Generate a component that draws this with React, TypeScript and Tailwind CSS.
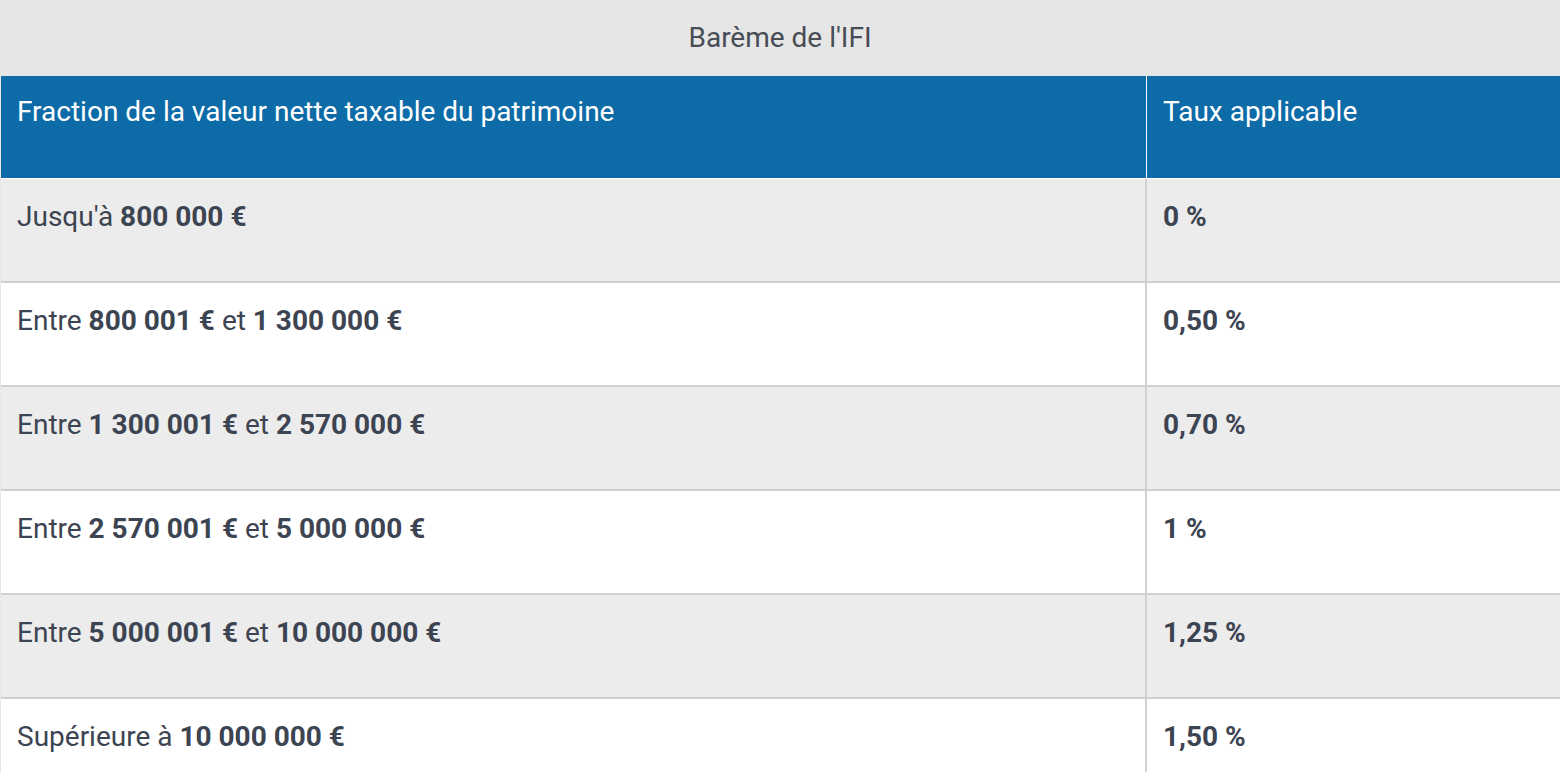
import React from "react";

const rows: { label: React.ReactNode; rate: string }[] = [
  { label: <>Jusqu'à <b className="font-bold">800 000 €</b></>, rate: "0 %" },
  { label: <>Entre <b className="font-bold">800 001 €</b> et <b className="font-bold">1 300 000 €</b></>, rate: "0,50 %" },
  { label: <>Entre <b className="font-bold">1 300 001 €</b> et <b className="font-bold">2 570 000 €</b></>, rate: "0,70 %" },
  { label: <>Entre <b className="font-bold">2 570 001 €</b> et <b className="font-bold">5 000 000 €</b></>, rate: "1 %" },
  { label: <>Entre <b className="font-bold">5 000 001 €</b> et <b className="font-bold">10 000 000 €</b></>, rate: "1,25 %" },
  { label: <>Supérieure à <b className="font-bold">10 000 000 €</b></>, rate: "1,50 %" },
];

export default function App() {
  return (
    <div className="w-[1560px] h-[772px] overflow-hidden bg-white font-['Roboto',sans-serif] text-[28px] leading-[42px]">
      <div className="h-[76px] bg-[#e6e6e6] flex items-center justify-center text-[#474c55]">
        Barème de l'IFI
      </div>
      <div className="border-l border-[#e6e6e6]">
        <div className="grid grid-cols-[1146px_1fr] bg-[#0d6ba8] text-white h-[103px] border-b border-white">
          <div className="px-[16px] pt-[15px] border-r border-white">Fraction de la valeur nette taxable du patrimoine</div>
          <div className="px-[16px] pt-[15px]">Taux applicable</div>
        </div>
        {rows.map((r, i) => (
          <div
            key={i}
            className={`grid grid-cols-[1146px_1fr] h-[104px] border-b-2 border-[#d0d0d0] text-[#3d4451] ${i % 2 === 0 ? "bg-[#ececec]" : "bg-white"}`}
          >
            <div className="px-[16px] pt-[17px] border-r-2 border-[#d0d0d0]">{r.label}</div>
            <div className="px-[16px] pt-[17px] font-bold">{r.rate}</div>
          </div>
        ))}
      </div>
    </div>
  );
}
